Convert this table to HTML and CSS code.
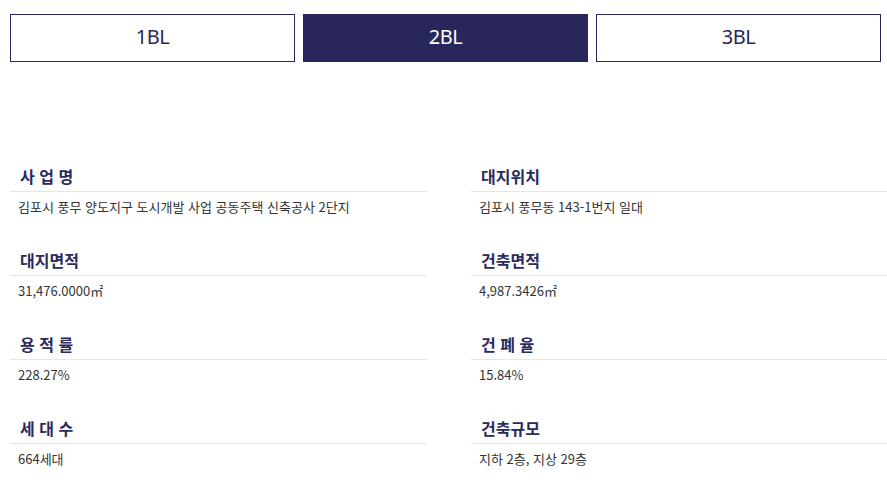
FILE: index.html
```html
<!DOCTYPE html>
<html lang="ko">
<head>
<meta charset="utf-8">
<link rel="stylesheet" href="styles.css">
</head>
<body>
<div class="tabs">
  <div class="tab">1BL</div>
  <div class="tab active">2BL</div>
  <div class="tab">3BL</div>
</div>
<div class="info">
  <div class="item"><div class="label">사 업 명</div><div class="value">김포시 풍무 양도지구 도시개발 사업 공동주택 신축공사 2단지</div></div>
  <div class="item"><div class="label">대지위치</div><div class="value">김포시 풍무동 143-1번지 일대</div></div>
  <div class="item"><div class="label">대지면적</div><div class="value">31,476.0000㎡</div></div>
  <div class="item"><div class="label">건축면적</div><div class="value">4,987.3426㎡</div></div>
  <div class="item"><div class="label">용 적 률</div><div class="value">228.27%</div></div>
  <div class="item"><div class="label">건 폐 율</div><div class="value">15.84%</div></div>
  <div class="item"><div class="label">세 대 수</div><div class="value">664세대</div></div>
  <div class="item"><div class="label">건축규모</div><div class="value">지하 2층, 지상 29층</div></div>
</div>
</body>
</html>
```
FILE: styles.css
```css
body {
  margin: 0;
  background: #fff;
  font-family: "Noto Sans", "Noto Sans CJK KR", sans-serif;
}
.tabs {
  display: flex;
  gap: 8px;
  padding: 14px 6px 0 10px;
}
.tab {
  flex: 1;
  height: 48px;
  box-sizing: border-box;
  border: 1px solid #28265a;
  display: flex;
  align-items: center;
  justify-content: center;
  padding-bottom: 3px;
  font-size: 20px;
  color: #28265a;
  letter-spacing: -0.5px;
}
.tab.active {
  background: #28265a;
  color: #fff;
}
.info {
  display: grid;
  grid-template-columns: 417px 416px;
  column-gap: 44px;
  padding-left: 10px;
  margin-top: 102px;
}
.item {
  margin-bottom: 31px;
}
.label {
  font-family: "Noto Sans CJK KR", sans-serif;
  font-size: 16px;
  font-weight: 700;
  line-height: 24px;
  color: #2b2a5c;
  padding: 0 0 3px 10px;
  border-bottom: 1px solid #e6e6e6;
}
.value {
  font-family: "Noto Sans CJK KR", sans-serif;
  font-size: 13px;
  line-height: 20px;
  color: #333;
  padding: 5px 0 0 8px;
}
```
